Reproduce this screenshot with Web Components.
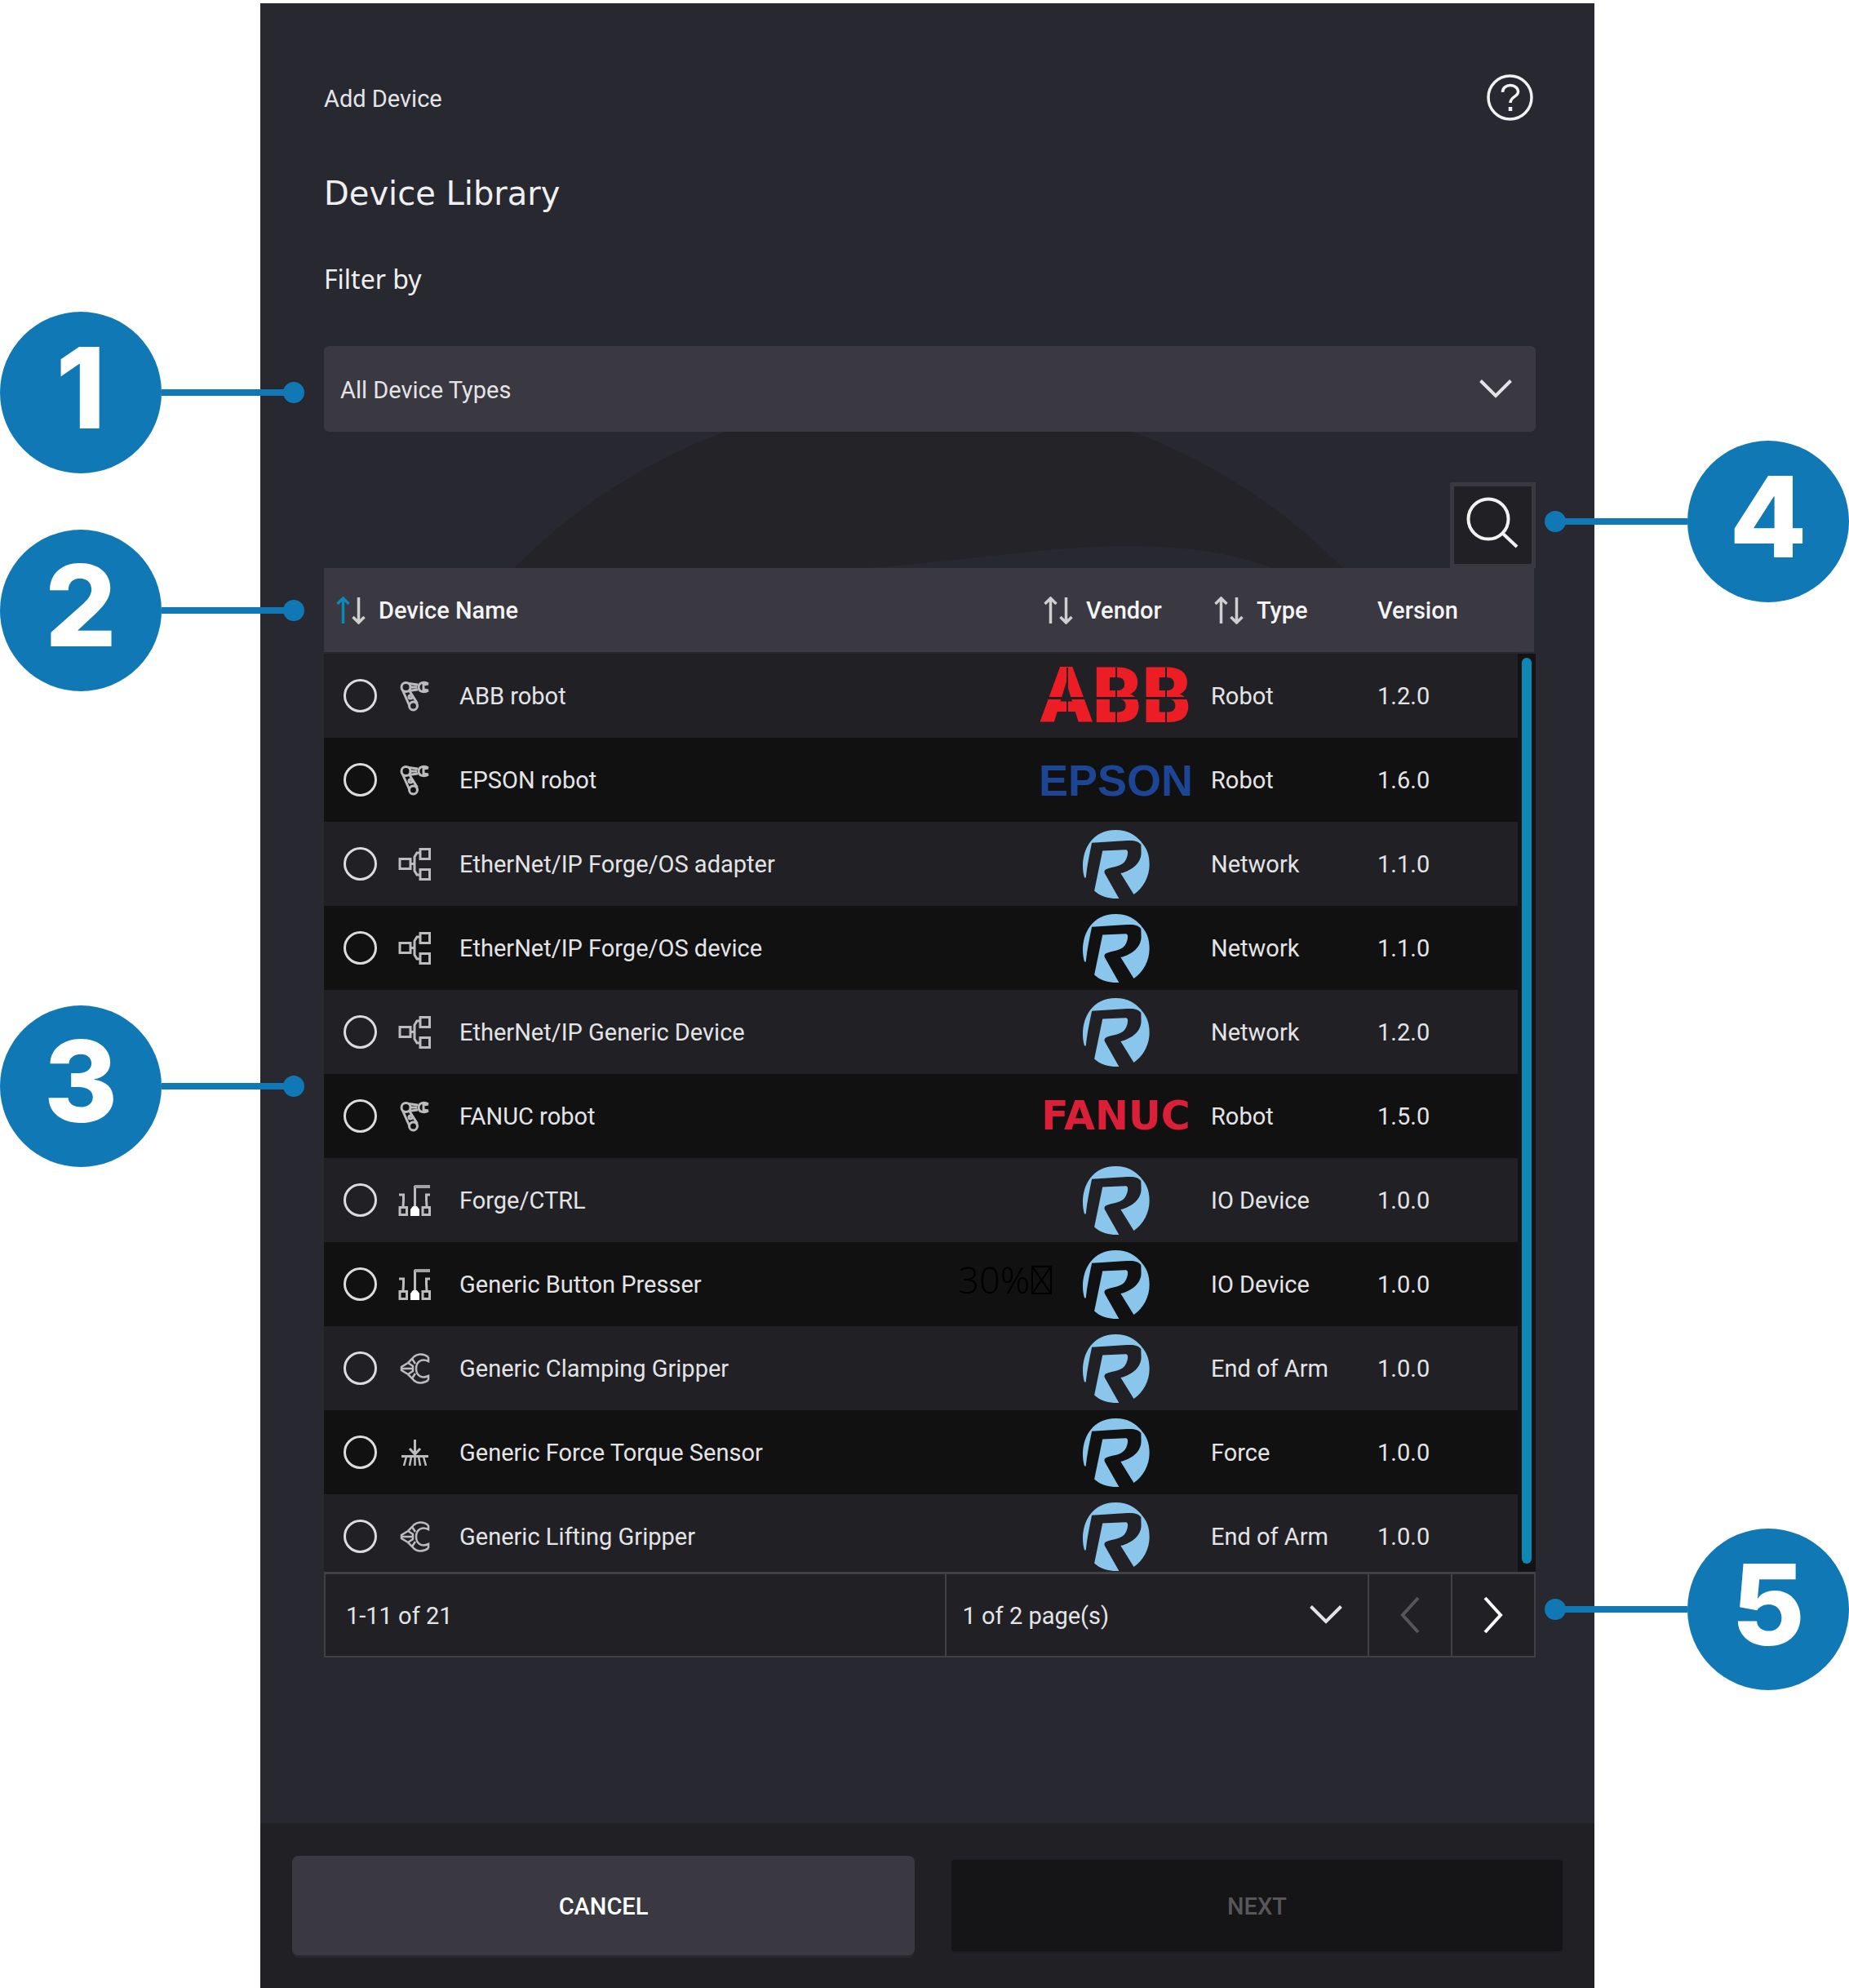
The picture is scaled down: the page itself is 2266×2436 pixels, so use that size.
<!DOCTYPE html>
<html lang="en">
<head>
<meta charset="utf-8">
<title>Add Device</title>
<style>
  html, body { margin: 0; background: #fff; }
  body {
    font-family: Roboto, "Liberation Sans", sans-serif;
    font-size: 29px;
    line-height: 40px;
    color: #e4e4e6;
    --panel: #282831;
    --bar: #212025;
    --row: #212125;
    --row-alt: #111112;
    --control: #3a3841;
    --line: #414045;
    --accent: #0f87b5;
    --callout: #0f78b5;
  }
</style>
</head>
<body>
<annotated-figure>
  <add-device-panel></add-device-panel>
  <call-out slot="notes" style="--y:481px">1</call-out>
  <call-out slot="notes" style="--y:748px">2</call-out>
  <call-out slot="notes" style="--y:1331px">3</call-out>
  <call-out slot="notes" side="right" style="--y:639px">4</call-out>
  <call-out slot="notes" side="right" style="--y:1972px">5</call-out>
</annotated-figure>

<script>
const reset = `*{box-sizing:border-box}button,select,input{font:inherit;color:inherit;margin:0;padding:0;border:0;background:none;appearance:none;border-radius:0;outline:0}svg{display:block;fill:none}`;

function define(name, markup, setup) {
  customElements.define(name, class extends HTMLElement {
    connectedCallback() {
      if (this.shadowRoot) return;
      const root = this.attachShadow({ mode: 'open' });
      root.innerHTML = typeof markup === 'function' ? markup(this) : markup;
      if (setup) setup(this, root);
    }
  });
}

/* Figure with notes pinned along both sides */
define('annotated-figure', `
<style>
  :host { display: block; position: relative; padding: 4px 312px 0 319px; }
</style>
<slot></slot><slot name="notes"></slot>`);

define('call-out', `
<style>
  :host { position: absolute; top: calc(var(--y) - 99px); left: 0; display: flex; align-items: center; }
  :host([side=right]) { left: auto; right: 0; flex-direction: row-reverse; }
  .disc { box-sizing: border-box; width: 198px; height: 198px; padding-bottom: 12px; border-radius: 50%; background: var(--callout);
    display: flex; align-items: center; justify-content: center;
    color: #fff; font: 800 138px/1 Inter, "Liberation Sans", sans-serif; }
  .line { width: 152px; height: 8px; margin-right: -3px; background: var(--callout); }
  :host([side=right]) .line { margin: 0 0 0 -3px; }
  .dot { width: 26px; height: 26px; border-radius: 50%; background: var(--callout); }
</style>
<div class="disc"><slot></slot></div><div class="line"></div><div class="dot"></div>`);

/* Icons of the interface */
const glyphs = {
  help: ['57', '57', '<circle cx="28.500" cy="28.500" r="26.500" stroke-width="3.500"/><path stroke-width="3.500" d="M19.500 22c0-5 4-8.500 9.500-8.500s9.500 3.500 9.500 8c0 6-9.500 6-9.500 13.500"/><path stroke-width="4.500" d="M29 40v5"/>'],
  down: ['42', '26', '<path stroke-width="4" d="M2.500 2.500 21 21 39.500 2.500"/>'],
  left: ['26', '46', '<path stroke-width="4" d="M23 2 4 23l19 21"/>'],
  right: ['26', '46', '<path stroke-width="4" d="M3 2l19 21L3 44"/>'],
  search: ['65', '63', '<circle cx="27" cy="27" r="24.500" stroke-width="4"/><path stroke-width="4" d="M44 44l18 17"/>'],
  sort: ['36', '34', '<path class="up" stroke-width="3.500" d="M8.500 33V2M1.500 9l7-7 7 7"/><path stroke-width="3.500" d="M27.500 1v31M20.500 25l7 7 7-7"/>'],
  robot: ['40', '40', '<g stroke-width="3"><circle cx="9.500" cy="9" r="5.500"/><path d="M13 4.500l11 1.500M13 13.500l11-1.500M15 9h8"/><path d="M37 5c-5-3-12-2-12 4s7 7 12 4M37 5l-6 1v6l6 1"/><path d="M5.500 13l8 18M13.500 13l10 16"/><circle cx="15" cy="21" r="2"/><circle cx="18.500" cy="32" r="5"/></g>'],
  network: ['40', '40', '<g stroke-width="3"><path d="M2 13.500h13v12H2zM27 1.500h11.500v12H27zM27 26.500h11.500v12H27zM15 19.500h5"/><path d="M27 6h-4l-3 5v17l3 5h4"/></g>'],
  io: ['40', '40', '<path stroke-width="3" d="M20.500 29V2"/><path stroke-width="4" stroke="#a2a2a4" d="M20 3h19"/><g stroke-width="3"><path d="M2 28.500h8.500v9H2zM30 28.500h8.500v9H30zM1 13h5.500v6L6 28M39 13h-4.500v6L35 28"/></g><path fill="#fff" stroke="none" d="M15 31l3-4h5l3 4v8H15z"/>'],
  grip: ['40', '40', '<g stroke-width="2.500"><path d="M37 6C31 1 22 1 17 8l-5 5M37 34c-6 5-15 5-20-2l-5-5"/><path d="M37 6v5c-9-4-15 1-15 9s6 13 15 9v5"/><path d="M12 13l-8 5v4l8 5M12 13l6 4v6l-6 4M5 20h13M17 8l4 6M17 32l4-6"/></g>'],
  force: ['40', '40', '<g stroke-width="3"><path d="M20.500 4v17M14 15l6.500 7 6.500-7"/><path d="M4 24.500h33"/><path d="M10 25l-3 11M16 25l-2 11M20.500 25v11M25 25l2 11M31 25l3 11" stroke-width="2.500"/></g>']
};
define('ui-icon', host => {
  const [w, h, body] = glyphs[host.getAttribute('name')];
  return `<style>${reset}:host{display:block;flex:none}svg{stroke:currentColor}.up{stroke:var(--up,currentColor)}</style>
  <svg width="${w}" height="${h}" viewBox="0 0 ${w} ${h}" aria-hidden="true">${body}</svg>`;
});

/* Vendor marks */
const marks = {
  ABB: '<span class="abb">ABB</span>',
  EPSON: '<span class="epson">EPSON</span>',
  FANUC: '<span class="fanuc">FANUC</span>',
  READY: `<svg width="83" height="84" viewBox="75 17 247 250" role="img" aria-label="Ready Robotics"><g fill="#8ac6ec">
    <path d="M84 191C64 124 92 17 198 17c42 0 72 18 94 44l-1 11c-8-14-28-18-52-16l-128 8c-8 40-17 80-22 127z"/>
    <path d="M290 60c20 20 31 46 31 82 0 46-22 86-57 110l-48-77c44-12 75-38 75-75z"/>
    <path d="M150 93l84-4c10 0 9 12 6 24-8 32-34 36-60 42-18 4-28 10-21 22l51 90c-34 2-66-6-90-28z"/></g></svg>`
};
define('vendor-mark', host => `
<style>${reset}
  :host { display: flex; width: 185px; height: 84px; align-items: center; justify-content: center; white-space: nowrap; }
  .abb { font: 900 94px/70px Roboto, sans-serif; color: #ed1d25; position: relative; }
  .abb::after { content: ""; position: absolute; inset: 0;
    background:
      linear-gradient(var(--cut), var(--cut)) 0 36px / 100% 3px no-repeat,
      linear-gradient(var(--cut), var(--cut)) 32px 0 / 2px 100% no-repeat,
      linear-gradient(var(--cut), var(--cut)) 92px 0 / 2px 100% no-repeat,
      linear-gradient(var(--cut), var(--cut)) 153px 0 / 2px 100% no-repeat; }
  .epson { font: 700 54px/60px "Liberation Sans", Arial, sans-serif; color: #1d4595; }
  .fanuc { font: 700 49px/60px "DejaVu Sans", sans-serif; color: #dc1f38; }
</style>${marks[host.getAttribute('name')]}`);

const devices = [
  ['robot', 'ABB robot', 'ABB', 'Robot', '1.2.0'],
  ['robot', 'EPSON robot', 'EPSON', 'Robot', '1.6.0'],
  ['network', 'EtherNet/IP Forge/OS adapter', 'READY', 'Network', '1.1.0'],
  ['network', 'EtherNet/IP Forge/OS device', 'READY', 'Network', '1.1.0'],
  ['network', 'EtherNet/IP Generic Device', 'READY', 'Network', '1.2.0'],
  ['robot', 'FANUC robot', 'FANUC', 'Robot', '1.5.0'],
  ['io', 'Forge/CTRL', 'READY', 'IO Device', '1.0.0'],
  ['io', 'Generic Button Presser', 'READY', 'IO Device', '1.0.0', '30%'],
  ['grip', 'Generic Clamping Gripper', 'READY', 'End of Arm', '1.0.0'],
  ['force', 'Generic Force Torque Sensor', 'READY', 'Force', '1.0.0'],
  ['grip', 'Generic Lifting Gripper', 'READY', 'End of Arm', '1.0.0']
];

define('device-table', () => `
<style>${reset}
  :host { display: flex; height: 1230px; overflow: hidden; }
  table { flex: 1; align-self: flex-start; border-collapse: separate; border-spacing: 0; table-layout: fixed; }
  col.vendor { width: 209px; } col.type { width: 204px; } col.version { width: 172px; }
  th, td { padding: 0; text-align: left; vertical-align: middle; }
  th { height: 105px; background: var(--control); border-bottom: 2px solid #27272d; font-weight: 500; color: #f4f4f5; }
  th button { display: flex; align-items: center; gap: 16px; padding-left: 4px; }
  th:first-child button { padding-left: 15px; --up: var(--accent); }
  th ui-icon { color: #cfcfd2; }
  td { height: 103px; background: var(--row); }
  tr:nth-child(even) td { background: var(--row-alt); --cut: var(--row-alt); }
  td { --cut: var(--row); position: relative; }
  label { display: flex; align-items: center; padding-left: 24px; }
  input { width: 41px; height: 41px; border: 3px solid #dcdcde; border-radius: 50%; margin-right: 26px; flex: none; }
  label ui-icon { margin-right: 35px; color: #bcbcbe; }
  .ghost { position: absolute; right: 195px; top: 16px; display: flex; align-items: center; gap: 2px;
    font: 300 45px/60px "Open Sans", "Noto Sans", sans-serif; color: #000; }
  .rail { width: 22px; display: flex; flex-direction: column; gap: 2px; }
  .cap { height: 103px; margin-right: 2px; background: var(--control); }
  .track { flex: 1; padding: 5px 5px 10px; background: #131315; display: flex; }
  .thumb { flex: 1; border-radius: 6px; background: var(--accent); }
</style>
<table>
  <colgroup><col><col class="vendor"><col class="type"><col class="version"></colgroup>
  <thead><tr>
    <th><button type="button"><ui-icon name="sort"></ui-icon>Device Name</button></th>
    <th><button type="button"><ui-icon name="sort"></ui-icon>Vendor</button></th>
    <th><button type="button"><ui-icon name="sort"></ui-icon>Type</button></th>
    <th>Version</th>
  </tr></thead>
  <tbody>${devices.map(([icon, name, vendor, type, version, ghost], i) => `
    <tr>
      <td><label for="d${i}"><input type="radio" name="device" id="d${i}"><ui-icon name="${icon}"></ui-icon>${name}</label></td>
      <td><vendor-mark name="${vendor}"></vendor-mark>${ghost ? `<span class="ghost">${ghost}<svg width="25" height="35" viewBox="0 0 25 35" stroke="#000" stroke-width="2"><path d="M1 1h23v33H1zM1 1l23 33M24 1L1 34"/></svg></span>` : ''}</td>
      <td>${type}</td>
      <td>${version}</td>
    </tr>`).join('')}</tbody>
</table>
<div class="rail"><div class="cap"></div><div class="track"><div class="thumb"></div></div></div>`);

define('drop-down', host => `
<style>${reset}
  :host { display: grid; align-items: center; }
  select { grid-area: 1 / 1; width: 100%; height: 100%; padding: 2px 0 0 20px; }
  ui-icon { grid-area: 1 / 1; justify-self: end; margin-right: var(--inset, 28px); pointer-events: none; }
</style>
<select aria-label="${host.getAttribute('label')}"><option>${host.getAttribute('value')}</option></select>
<ui-icon name="down"></ui-icon>`);

define('page-bar', `
<style>${reset}
  :host { display: grid; grid-template-columns: 758fr 518fr 102px 102px; height: 105px; box-sizing: border-box;
    background: var(--row); border: 2px solid var(--line); border-top-width: 3px; }
  .range { display: flex; align-items: center; padding: 2px 0 0 25px; }
  drop-down { border-left: 2px solid var(--line); --inset: 30px; }
  button { border-left: 2px solid var(--line); display: flex; align-items: center; justify-content: center; color: #fff; }
  button:disabled { color: #56565a; }
</style>
<div class="range">1-11 of 21</div>
<drop-down label="Page" value="1 of 2 page(s)"></drop-down>
<button type="button" aria-label="Previous page" disabled><ui-icon name="left"></ui-icon></button>
<button type="button" aria-label="Next page"><ui-icon name="right"></ui-icon></button>`);

define('action-bar', `
<style>${reset}
  :host { display: flex; align-items: center; gap: 45px; padding: 40px 39px; background: var(--bar); font-weight: 500; }
  button { padding-top: 2px; border-radius: 8px; }
  .cancel { flex: 763; height: 122px; background: var(--control); color: #fff; box-shadow: 0 3px 0 #29282e; }
  .next { flex: 749; height: 112px; border-radius: 4px; background: #151517; color: #57575b; box-shadow: 0 2px 0 #1e1e21; }
</style>
<button class="cancel" type="button">CANCEL</button>
<button class="next" type="button" disabled>NEXT</button>`);

define('add-device-panel', `
<style>${reset}
  :host { display: flex; flex-direction: column; min-height: calc(100vh - 4px); background: var(--panel); }
  main { flex: 1; padding: 87px 72px 0 78px; }
  header { display: flex; align-items: center; justify-content: space-between; height: 57px; padding-right: 3px; }
  header span { padding-top: 2px; }
  header button { color: #f2f2f3; }
  h1 { font: 400 40px/50px "DejaVu Sans", sans-serif; margin: 64px 0 60px; color: #efeff0; }
  h2 { font: 400 32px/40px "Noto Sans", sans-serif; margin: 0 0 62px; color: #efeff0; }
  .types { height: 105px; background: var(--control); border-radius: 6px; }
  .tools { position: relative; height: 167px; display: flex; justify-content: flex-end; align-items: flex-end; overflow: hidden; }
  .tools > svg { position: absolute; inset: 0; width: 100%; height: 100%; }
  .search { position: relative; width: 105px; height: 105px; padding: 0 0 6px; border: 5px solid var(--control); background: var(--row); display: flex; align-items: center; justify-content: center; color: #f2f2f3; }
</style>
<main>
  <header><span>Add Device</span><button type="button" aria-label="Help"><ui-icon name="help"></ui-icon></button></header>
  <h1>Device Library</h1>
  <h2>Filter by</h2>
  <drop-down class="types" label="Filter by" value="All Device Types"></drop-down>
  <div class="tools">
    <svg viewBox="0 0 1485 167" aria-hidden="true"><circle cx="741" cy="669" r="714" fill="#242328"/><path fill="#282831" d="M650 168c120-8 240-28 333-28 80 0 135 10 181 28z"/></svg>
    <button class="search" type="button" aria-label="Search"><ui-icon name="search"></ui-icon></button>
  </div>
  <device-table></device-table>
  <page-bar></page-bar>
</main>
<action-bar></action-bar>`);
</script>
</body>
</html>
